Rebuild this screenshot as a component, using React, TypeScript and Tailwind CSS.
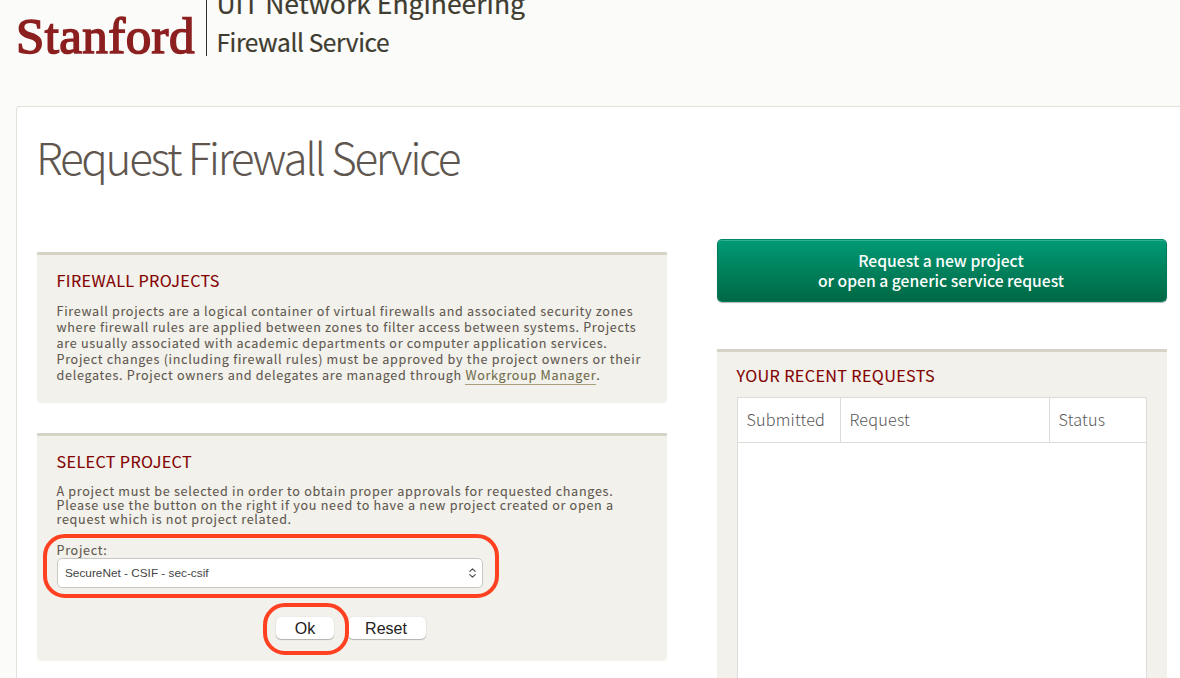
import type { ReactNode } from "react";
import clsx from "clsx";

const COLUMNS = [
  { label: "Submitted", className: "w-[102px]" },
  { label: "Request", className: "w-[209px] border-l" },
  { label: "Status", className: "flex-1 border-l" },
];

const Header = () => {
  return (
    <header className="flex h-[106px] items-start overflow-hidden pl-4">
      <div className="flex h-14 w-[191px] items-start border-r border-[#2f2e28]">
        <span className="mt-2 block h-12 whitespace-nowrap font-['Liberation_Serif',serif] text-[51px] leading-[56px] tracking-[0.4px] text-[#8c1f1f] [-webkit-text-stroke:1.6px_#8c1f1f]">
          Stanford
        </span>
      </div>
      <div className="whitespace-nowrap pl-[9.5px] text-[#3f3c30]">
        <div className="-mt-3.5 h-[39px] text-[26.5px] leading-[34px] [-webkit-text-stroke:0.2px_#3f3c30]">
          UIT Network Engineering
        </div>
        <div className="text-[24.5px] leading-[34px] tracking-[-0.4px] [-webkit-text-stroke:0.2px_#3f3c30]">
          Firewall Service
        </div>
      </div>
    </header>
  );
};

const Card = ({
  title,
  className,
  children,
}: {
  title: string;
  className?: string;
  children: ReactNode;
}) => {
  return (
    <section
      className={clsx(
        "rounded-b border-t-[3px] border-[#d5d3c5] bg-[#f2f1eb] px-5",
        className
      )}
    >
      <h2 className="-ml-[0.5px] whitespace-nowrap text-[16.2px] leading-5 tracking-[0.35px] text-[#820000] [-webkit-text-stroke:0.1px_#820000]">
        {title}
      </h2>
      {children}
    </section>
  );
};

const Highlight = ({ className }: { className: string }) => {
  return (
    <span
      className={clsx(
        "pointer-events-none absolute z-10 border-4 border-[#ff4122]",
        className
      )}
    />
  );
};

const FirewallProjects = () => {
  return (
    <Card title="FIREWALL PROJECTS" className="h-[151px] pt-[15px]">
      <p className="-ml-[0.5px] mt-[13px] whitespace-nowrap text-[12.6px] leading-4 tracking-[0.69px] text-[#5f574f] [-webkit-text-stroke:0.08px]">
        Firewall projects are a logical container of virtual firewalls and
        associated security zones
        <br />
        where firewall rules are applied between zones to filter access between
        systems. Projects
        <br />
        are usually associated with academic departments or computer application
        services.
        <br />
        Project changes (including firewall rules) must be approved by the
        project owners or their
        <br />
        delegates. Project owners and delegates are managed through{" "}
        <a
          href="#workgroup"
          className="inline-block h-[18px] border-b border-[#a89e7e] align-top text-[#6f6a4a]"
        >
          Workgroup Manager
        </a>
        .
      </p>
    </Card>
  );
};

const SelectProject = () => {
  return (
    <Card title="SELECT PROJECT" className="mt-[30px] h-[228px] pt-[15px]">
      <p className="-ml-[0.5px] mt-[13px] whitespace-nowrap text-[12.6px] leading-[14px] tracking-[0.69px] text-[#5f574f] [-webkit-text-stroke:0.08px]">
        A project must be selected in order to obtain proper approvals for
        requested changes.
        <br />
        Please use the button on the right if you need to have a new project
        created or open a
        <br />
        request which is not project related.
      </p>
      <div className="relative mt-[17px] w-[426px]">
        <Highlight className="-left-3.5 -top-[9px] h-16 w-[456px] rounded-[22px]" />
        <label className="-ml-[0.5px] block h-[15px] text-[12.6px] leading-[14px] tracking-[0.69px] text-[#5f574f] [-webkit-text-stroke:0.08px]">
          Project:
        </label>
        <div className="flex h-[30px] items-center justify-between rounded-[5px] border border-[#c8c7c4] bg-white pl-[7px] pr-1.5 font-['Liberation_Sans',sans-serif] text-[11.8px] text-[#444]">
          <span className="pt-px">SecureNet - CSIF - sec-csif</span>
          <svg
            width="7"
            height="10"
            viewBox="0 0 7 10"
            fill="none"
            stroke="#444"
            strokeWidth="1.1"
            strokeLinecap="round"
            strokeLinejoin="round"
          >
            <path d="M0.8 3.3 3.5 0.9 6.2 3.3M0.8 6.7 3.5 9.1 6.2 6.7" />
          </svg>
        </div>
      </div>
      <div className="mt-[29px] flex gap-[14px] pl-[219px] font-['Liberation_Sans',sans-serif] text-base text-[#222]">
        <div className="relative">
          <Highlight className="-left-[13px] -top-3.5 h-[52px] w-[86px] rounded-[22px]" />
          <button
            type="submit"
            className="block h-[22px] w-[58px] rounded-[5px] bg-white leading-[23px] shadow-[0_1px_1px_rgba(0,0,0,0.25),0_0_1px_rgba(0,0,0,0.2)]"
          >
            Ok
          </button>
        </div>
        <button
          type="reset"
          className="block h-[22px] w-[78px] rounded-[5px] bg-white pr-0.5 leading-[23px] shadow-[0_1px_1px_rgba(0,0,0,0.25),0_0_1px_rgba(0,0,0,0.2)]"
        >
          Reset
        </button>
      </div>
    </Card>
  );
};

const RecentRequests = () => {
  return (
    <Card title="YOUR RECENT REQUESTS" className="mt-[47px] h-[340px] pt-[13px]">
      <div className="mt-3 h-[300px] border border-[#dcdcda] bg-white">
        <div className="flex h-[45px] border-b border-[#dcdcda]">
          {COLUMNS.map(({ label, className }) => (
            <div
              key={label}
              className={clsx(
                "border-[#dcdcda] pl-[8.5px] pr-1 text-[16.2px] font-light leading-[42px] tracking-[0.2px] text-[#555]",
                className
              )}
            >
              {label}
            </div>
          ))}
        </div>
      </div>
    </Card>
  );
};

const App = () => {
  return (
    <div className="h-[678px] w-[1180px] overflow-hidden bg-[#fbfbf9] font-['Noto_Sans_CJK_SC',sans-serif]">
      <Header />
      <main className="ml-4 h-[600px] rounded-tl border-l border-t border-[#e2e2da] bg-white pl-5 pt-[17px]">
        <h1 className="-ml-px h-[115px] whitespace-nowrap text-[44px] font-light leading-[64px] tracking-[-2.33px] text-[#5f574f]">
          Request Firewall Service
        </h1>
        <div className="flex gap-[50px]">
          <div className="w-[630px] pt-[13px]">
            <FirewallProjects />
            <SelectProject />
          </div>
          <div className="w-[450px]">
            <button
              type="button"
              className="block h-[63px] w-full rounded-[5px] border border-[#007a5c] border-t-[#008765] bg-linear-to-b from-[#009b76] to-[#006844] pr-0.5 text-[15.7px] font-medium leading-5 text-white shadow-[inset_0_1px_0_rgba(255,255,255,0.2),0_1px_1px_rgba(0,0,0,0.3)]"
            >
              Request a new project
              <br />
              or open a generic service request
            </button>
            <RecentRequests />
          </div>
        </div>
      </main>
    </div>
  );
};

export default App;
